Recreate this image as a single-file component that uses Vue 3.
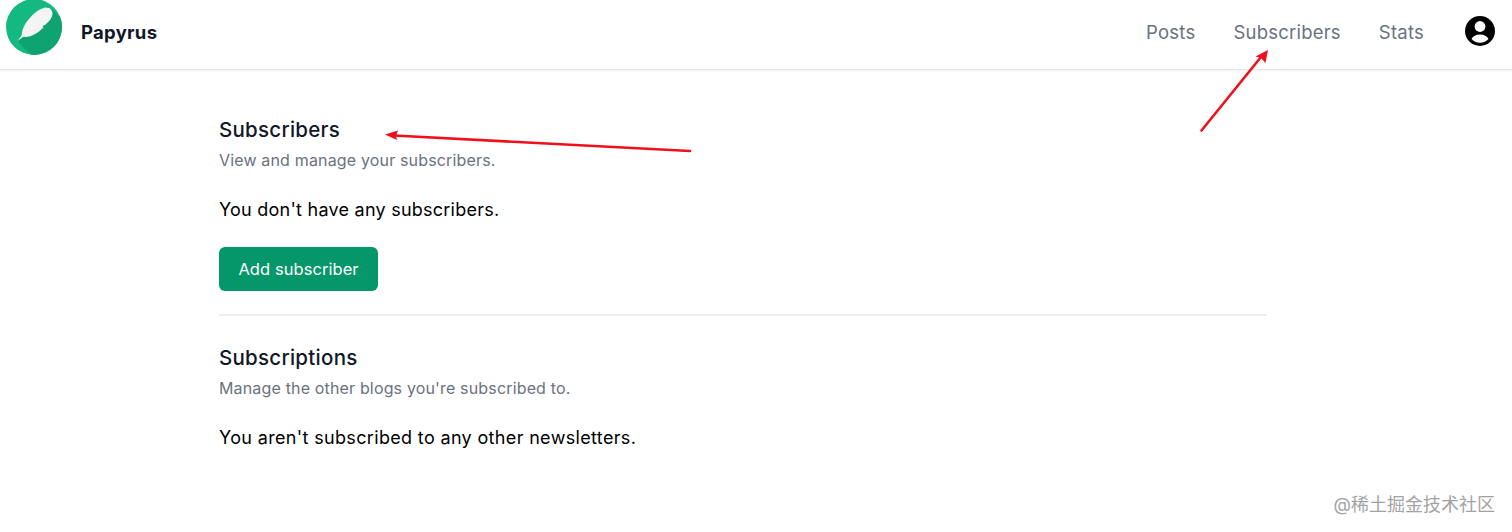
<template>
  <div class="page">
    <header class="topbar">
      <div class="brand">
        <svg class="logo" viewBox="0 0 56 56" width="56" height="56">
          <defs>
            <clipPath id="logo-clip"><circle cx="28" cy="28" r="28" /></clipPath>
          </defs>
          <circle cx="28" cy="28" r="28" fill="#14b881" />
          <path clip-path="url(#logo-clip)" d="M11 42 L46 10 L86 50 L51 82 Z" fill="#0ea371" />
          <path d="M11 42.5 C13 40 15 37.5 16 35.5 C15.5 31.5 18.5 25 23 20 C27 15 33 10 38 9 C39.5 8.2 41 8.6 42 9 C44.5 9 46.5 11.5 46.5 14.5 C46.5 18 44 21.5 41.5 23.5 C40.5 25 38.5 26.5 36.5 27 L37.5 28.2 C35 31 32 33.6 29 35 C25 37.5 21 38.3 17.5 37.8 C15.5 39 13 41 11 42.5 Z" fill="#f4f4f4" />
        </svg>
        <span class="brand-name">Papyrus</span>
      </div>
      <nav class="nav">
        <a v-for="link in links" :key="link" class="nav-link">{{ link }}</a>
        <svg class="avatar" viewBox="0 0 30 30" width="30" height="30">
          <circle cx="15" cy="15" r="15" fill="#000" />
          <circle cx="15" cy="10.5" r="5.4" fill="#fff" />
          <path d="M6.5 23 C8 20 11 18.4 15 18.4 C19 18.4 22 20 23.5 23 C21.5 25.4 18.5 26.8 15 26.8 C11.5 26.8 8.5 25.4 6.5 23 Z" fill="#fff" />
        </svg>
      </nav>
    </header>

    <main class="content">
      <section class="block first">
        <h2>Subscribers</h2>
        <p class="hint">View and manage your subscribers.</p>
        <p class="empty">You don't have any subscribers.</p>
        <button class="add-btn">Add subscriber</button>
      </section>
      <section class="block">
        <h2>Subscriptions</h2>
        <p class="hint">Manage the other blogs you're subscribed to.</p>
        <p class="empty wide">You aren't subscribed to any other newsletters.</p>
      </section>
    </main>

    <svg class="arrows" viewBox="0 0 1512 532" width="1512" height="532">
      <g stroke="#f0101c" stroke-width="2.6" stroke-linecap="round" fill="none">
        <path d="M690 151 L394 135.5" />
        <path d="M1201.5 130.5 L1261 57" />
      </g>
      <g fill="#f0101c">
        <path d="M385 134.5 L398 130.5 L396 136 L397 140 Z" />
        <path d="M1268 50 L1265.5 63 L1261 58 L1255.5 56.5 Z" />
      </g>
    </svg>

    <div class="watermark">@稀土掘金技术社区</div>
  </div>
</template>

<script setup>
const links = ['Posts', 'Subscribers', 'Stats']
</script>

<style>
html, body {
  margin: 0;
  background: #fff;
  overflow: hidden;
}
</style>

<style scoped>
.page {
  position: relative;
  width: 1512px;
  height: 532px;
  overflow: hidden;
  font-family: Inter, "Noto Sans CJK SC", sans-serif;
  color: #111827;
}

.topbar {
  display: flex;
  align-items: center;
  justify-content: space-between;
  height: 70px;
  padding: 0 17px 16px 6px;
  box-sizing: border-box;
  border-bottom: 1px solid #e4e4e6;
  box-shadow: 0 1px 2px rgba(0, 0, 0, 0.06);
}

.brand {
  display: flex;
  align-items: center;
  gap: 19px;
  margin-top: 1px;
}

.brand-name {
  font-size: 18.5px;
  font-weight: 700;
  letter-spacing: 0.27px;
  padding-top: 10px;
}

.logo {
  display: block;
}

.nav {
  display: flex;
  align-items: center;
  gap: 38px;
  padding-top: 10px;
}

.nav-link {
  font-size: 18.5px;
  letter-spacing: 0.22px;
  color: #6b7280;
}

.avatar {
  display: block;
  margin-left: 3px;
  margin-top: -1px;
}

.content {
  width: 1048px;
  margin-left: 219px;
  padding-top: 46px;
}

.block.first {
  padding-bottom: 23px;
  border-bottom: 2px solid #eeeeef;
  margin-bottom: 28px;
}

h2 {
  margin: 0;
  font-size: 20.5px;
  line-height: 28px;
  font-weight: 500;
  letter-spacing: 0.27px;
}

.hint {
  margin: 6px 0 0;
  font-size: 16px;
  line-height: 20px;
  letter-spacing: 0.16px;
  color: #6b7280;
}

.empty {
  margin: 26px 0 0;
  font-size: 18px;
  line-height: 28px;
  letter-spacing: 0.24px;
  color: #000;
}

.empty.wide {
  letter-spacing: 0.34px;
}

.add-btn {
  display: block;
  margin-top: 23px;
  width: 159px;
  height: 44px;
  border: none;
  border-radius: 6px;
  background: #059669;
  color: #fff;
  font-family: inherit;
  font-size: 16.5px;
  font-weight: 400;
  letter-spacing: 0.06px;
}

.arrows {
  position: absolute;
  top: 0;
  left: 0;
  pointer-events: none;
}

.watermark {
  position: absolute;
  right: 17px;
  top: 493px;
  font-size: 18px;
  line-height: 24px;
  color: #a3a3a3;
}
</style>
